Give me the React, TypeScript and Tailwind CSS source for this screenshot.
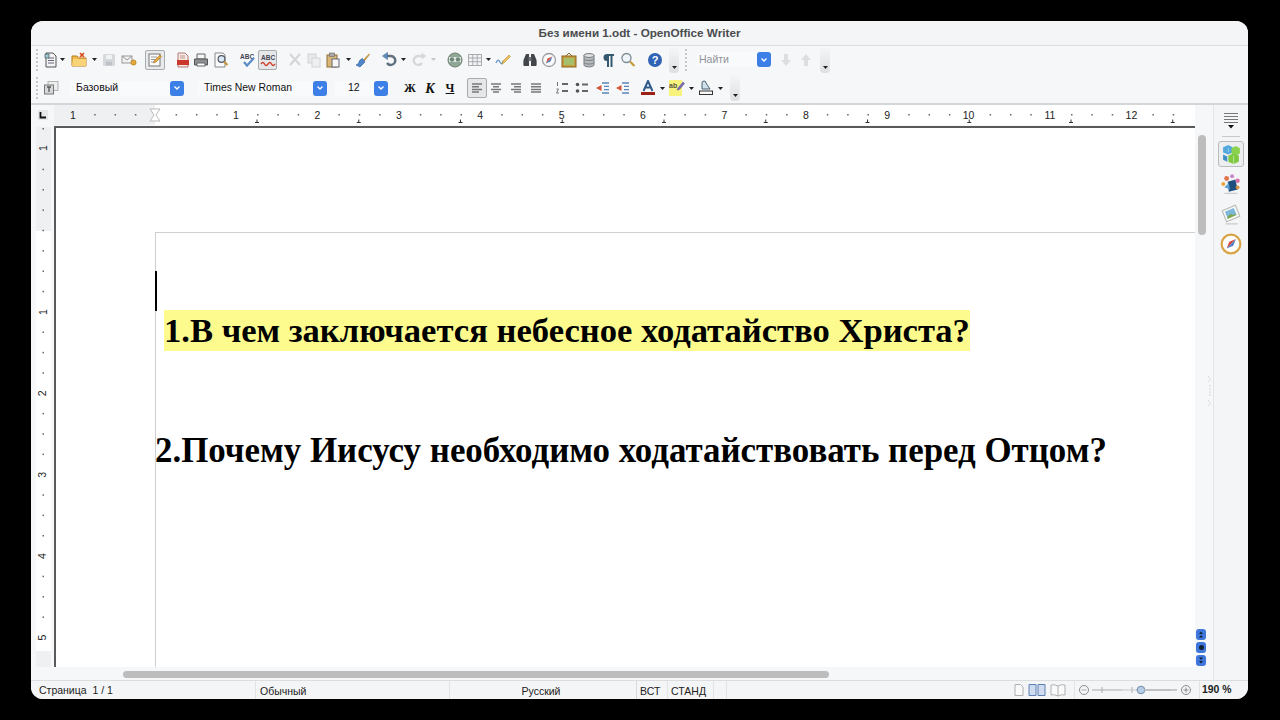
import type { ReactNode } from "react";

const cm = 81.4;
const sans = "font-['Liberation_Sans',Arial,sans-serif]";

function Ico({ children, className = "" }: { children: ReactNode; className?: string }) {
  return (
    <svg viewBox="0 0 16 16" className={`h-4 w-4 shrink-0 ${className}`} fill="none">
      {children}
    </svg>
  );
}

function Caret({ className = "", light = false }: { className?: string; light?: boolean }) {
  return (
    <svg viewBox="0 0 5 3" className={`h-[3px] w-[5px] shrink-0 ${className}`}>
      <path d="M0 0h5L2.5 3z" fill={light ? "#c8c8c8" : "#222"} />
    </svg>
  );
}

function Grip({ className = "" }: { className?: string }) {
  return <div className={`h-[22px] w-[2px] shrink-0 border-l-2 border-dotted border-[#c4c8cc] ${className}`} />;
}

function Overflow({ className = "" }: { className?: string }) {
  return (
    <div className={`flex h-[26px] w-[10px] shrink-0 items-end justify-center rounded-sm bg-gradient-to-b from-[#f5f6f7] to-[#dedfe0] pb-[4px] ${className}`}>
      <Caret />
    </div>
  );
}

function BlueBtn() {
  return (
    <div className="flex h-[15px] w-[14px] shrink-0 items-center justify-center rounded-[3px] bg-[#3c7fe6]">
      <svg viewBox="0 0 8 6" className="h-[6px] w-[8px]">
        <path d="M1.5 1.5 4 4l2.5-2.5" stroke="#fff" strokeWidth="1.3" fill="none" />
      </svg>
    </div>
  );
}

function Lines({ rows }: { rows: [number, number][] }) {
  return (
    <Ico>
      {rows.map(([a, b], i) => (
        <path key={i} d={`M${a} ${4 + i * 2.7}H${b}`} stroke="#777" strokeWidth="1.5" />
      ))}
    </Ico>
  );
}

function MainToolbar() {
  return (
    <div className="flex h-[27px] shrink-0 items-center pl-[5px]">
      <Grip />
      <Ico className="ml-[5px]">
        <path d="M3 1h7l3 3v11H3z" fill="#f4f4f4" stroke="#555" />
        <path d="M5 6h6M5 8.5h6M5 11h6" stroke="#667" />
        <path d="M2 2h4v4H2z" fill="#9cc" stroke="#456" strokeWidth=".7" />
      </Ico>
      <Caret className="ml-[1px]" />
      <Ico className="ml-[6px]">
        <path d="M1 4h5l1.500 2H15v8H1z" fill="#f3bb4c" stroke="#b67a1f" />
        <path d="M2 7h13v7H1z" fill="#f8d377" />
        <path d="m9 1 4 4M13 1 9 5" stroke="#d9481c" strokeWidth="1.600" />
      </Ico>
      <Caret className="ml-[5px]" />
      <Ico className="ml-[4px]">
        <rect x="2" y="2" width="12" height="12" rx="1.500" fill="#d6d9dc" />
        <rect x="5" y="3" width="6" height="4" fill="#f1f2f3" />
        <rect x="5" y="9.500" width="6" height="4" fill="#bfc3c7" />
      </Ico>
      <Ico className="ml-[4px]">
        <rect x="1" y="4" width="10" height="7" fill="#f2f2f2" stroke="#999" />
        <path d="m1 4 5 4 5-4" stroke="#999" />
        <circle cx="12.500" cy="10.500" r="2.600" fill="#e4a93a" stroke="#a87416" strokeWidth=".6" />
      </Ico>
      <div className="ml-[8px] flex h-[20px] w-[20px] shrink-0 items-center justify-center rounded-[2px] border border-[#a9acaf] bg-[#e9eaeb]">
        <Ico>
          <rect x="2" y="2" width="11" height="12" fill="#fafafa" stroke="#777" />
          <path d="M4 5h6M4 7.500h4M4 10h3" stroke="#999" />
          <path d="m6.500 11 1-2.500L13 3l1.500 1.500L9 10z" fill="#e6a93e" stroke="#a06c14" strokeWidth=".6" />
        </Ico>
      </div>
      <Ico className="ml-[10px]">
        <path d="M3 1h7l3 3v11H3z" fill="#f8e9e6" stroke="#b07b72" />
        <rect x="2" y="8" width="12" height="5" fill="#c9382b" />
        <path d="M5 4h5M5 6h5" stroke="#b98" />
      </Ico>
      <Ico className="ml-[2px]">
        <path d="M4 2h8v5H4z" fill="#f4f4f4" stroke="#666" />
        <path d="M1.500 7h13v6h-13z" fill="#8b8f93" stroke="#555" />
        <path d="M4 11h8v3H4z" fill="#fff" stroke="#666" />
      </Ico>
      <Ico className="ml-[4px]">
        <path d="M2 1h8l2 2v12H2z" fill="#fafafa" stroke="#888" />
        <circle cx="8.500" cy="7" r="3.400" fill="#d8eaf5" stroke="#556" strokeWidth="1.200" />
        <path d="m11 9.500 3.500 3.500" stroke="#c49434" strokeWidth="2" />
      </Ico>
      <Ico className="ml-[11px]">
        <text x="0" y="7" fontSize="6.500" fontWeight="700" fill="#445" fontFamily="Liberation Sans">ABC</text>
        <path d="m4 10 3 3.500L14 6" stroke="#5b8ec9" strokeWidth="2.200" />
      </Ico>
      <div className="ml-[2px] flex h-[20px] w-[19px] shrink-0 items-center justify-center rounded-[2px] border border-[#a9acaf] bg-[#e6e7e8]">
        <Ico>
          <text x="1" y="8" fontSize="6.500" fontWeight="700" fill="#445" fontFamily="Liberation Sans">ABC</text>
          <path d="M1 12q2-3 3.500 0t3.500 0 3.500 0 3.500 0" stroke="#d0402f" strokeWidth="1.400" />
        </Ico>
      </div>
      <Ico className="ml-[10px]">
        <path d="m3 2 10 11M13 2 3 13" stroke="#d4d6d8" strokeWidth="2.200" />
      </Ico>
      <Ico className="ml-[3px]">
        <rect x="2" y="2" width="8" height="9" fill="#e8e9ea" stroke="#d2d4d6" />
        <rect x="6" y="6" width="8" height="9" fill="#eeeff0" stroke="#d2d4d6" />
      </Ico>
      <Ico className="ml-[3px]">
        <rect x="2" y="3" width="10" height="12" fill="#d8b779" stroke="#8b6f3d" />
        <rect x="4.500" y="1" width="5" height="3.500" fill="#aaa" stroke="#666" strokeWidth=".6" />
        <rect x="7" y="7" width="7" height="8" fill="#f7f7f7" stroke="#667" />
      </Ico>
      <Caret className="ml-[5px]" />
      <Ico className="ml-[4px]">
        <path d="m8 8 6-6.500 1 1L9.500 9.500z" fill="#c49a4f" />
        <path d="M7.500 6.500 10 10l-5 5-4-2q3-1 3-3t3.500-3.500z" fill="#4f86c9" stroke="#2f5f9e" strokeWidth=".6" />
      </Ico>
      <Ico className="ml-[10px]">
        <path d="M5 4h5a4.500 4.500 0 1 1-4 7" stroke="#5f6f7e" strokeWidth="2.400" />
        <path d="M6.500 0.500 1.500 4l5 3.500z" fill="#5d8fc4" stroke="#3f5f80" strokeWidth=".5" />
      </Ico>
      <Caret className="ml-[4px]" />
      <Ico className="ml-[6px]">
        <path d="M11 4H6a4.500 4.500 0 1 0 4 7" stroke="#d6d9dc" strokeWidth="2.400" />
        <path d="m9.500.5 5 3.500-5 3.500z" fill="#d6d9dc" />
      </Ico>
      <Caret light className="ml-[3px]" />
      <Ico className="ml-[11px]">
        <circle cx="8" cy="8" r="7" fill="#8fa896" stroke="#6b7d70" />
        <rect x="2" y="5" width="12" height="5" fill="#dfe6e0" />
        <circle cx="5" cy="7.500" r="2.200" fill="#6d8878" />
        <circle cx="11" cy="7.500" r="2.200" fill="#6d8878" />
      </Ico>
      <Ico className="ml-[4px]">
        <path d="M1.500 2.500h13v11h-13zM1.500 6h13M1.500 9.700h13M5.800 2.500v11M10.200 2.500v11" fill="#f2f3f4" stroke="#a7abaf" />
      </Ico>
      <Caret className="ml-[3px]" />
      <Ico className="ml-[4px]">
        <path d="M1 11q2-5 4-1t3-1" stroke="#6f9fd0" strokeWidth="1.400" />
        <path d="m7 12 1-3 6-6 1.500 1.500-6 6z" fill="#ecc05e" stroke="#b78d34" strokeWidth=".6" />
      </Ico>
      <Ico className="ml-[11px]">
        <path d="M1.500 8 4 2h3v12H2q-1 0-.5-6zM14.500 8 12 2H9v12h5q1 0 .5-6z" fill="#43474b" />
        <rect x="6.500" y="5" width="3" height="4" fill="#6d7276" />
      </Ico>
      <Ico className="ml-[3px]">
        <circle cx="8" cy="8" r="6.500" fill="#fafafa" stroke="#9a9ea2" strokeWidth="1.300" />
        <path d="m11.500 4.500-5 2L5 11.500z" fill="#d84a3a" />
        <path d="m11.500 4.500-2 5-4.500 2z" fill="#4d7fc2" />
      </Ico>
      <Ico className="ml-[4px]">
        <rect x="1" y="4" width="14" height="11" fill="#c99b3f" stroke="#8a6720" />
        <rect x="3" y="6" width="10" height="7" fill="#a4c06c" />
        <path d="M5 4 8 1l3 3" stroke="#8a6720" />
      </Ico>
      <Ico className="ml-[4px]">
        <path d="M3 3v10c0 2.500 10 2.500 10 0V3z" fill="#b6babd" stroke="#777c80" />
        <ellipse cx="8" cy="3.500" rx="5" ry="2" fill="#dfe1e3" stroke="#777c80" />
        <path d="M3 7c0 2 10 2 10 0M3 10.500c0 2 10 2 10 0" stroke="#777c80" />
      </Ico>
      <Ico className="ml-[3px]">
        <path d="M7 2h7v2h-1.500v11h-2V4H9v11H7V9a3.500 3.500 0 0 1 0-7z" fill="#35596f" />
      </Ico>
      <Ico className="ml-[4px]">
        <circle cx="6.500" cy="6" r="4.500" fill="#eef5f9" stroke="#7c8b96" strokeWidth="1.300" />
        <path d="m10 9.500 4.500 4.500" stroke="#c89a3b" strokeWidth="2.200" />
      </Ico>
      <Ico className="ml-[11px]">
        <circle cx="8" cy="8" r="7" fill="#2f63b5" />
        <text x="8" y="12" textAnchor="middle" fontSize="11" fontWeight="700" fill="#fff" fontFamily="Liberation Sans">?</text>
      </Ico>
      <Overflow className="ml-[6px]" />
      <Grip className="ml-[6px]" />
      <div className={`ml-[10px] flex h-[15px] w-[60px] shrink-0 items-center bg-[#f9fafb] pl-[2px] text-[10.5px] text-[#8f9397] ${sans}`}>
        Найти
      </div>
      <BlueBtn />
      <Ico className="ml-[7px]">
        <path d="M6 2h4v6h3l-5 6-5-6h3z" fill="#dcdee0" />
      </Ico>
      <Ico className="ml-[4px]">
        <path d="M6 14h4V8h3L8 2 3 8h3z" fill="#dcdee0" />
      </Ico>
      <Overflow className="ml-[6px]" />
    </div>
  );
}

function FormatToolbar() {
  return (
    <div className={`flex h-[30px] shrink-0 items-center pl-[5px] text-[#111] ${sans}`}>
      <Grip />
      <Ico className="ml-[5px]">
        <rect x="5" y="1.500" width="10" height="9" fill="#eceded" stroke="#b3b5b7" />
        <rect x="1.500" y="5" width="9" height="9" fill="#d6d8da" stroke="#777" />
        <path d="M4 7h4M6 7v5" stroke="#555" strokeWidth="1.300" />
      </Ico>
      <div className="ml-[11px] flex h-[15px] w-[100px] shrink-0 items-center bg-[#f9fafb] pl-[6px] text-[10.5px]">Базовый</div>
      <BlueBtn />
      <div className="ml-[14px] flex h-[15px] w-[115px] shrink-0 items-center bg-[#f9fafb] pl-[6px] text-[10.4px]">Times New Roman</div>
      <BlueBtn />
      <div className="ml-[8px] flex h-[15px] w-[39px] shrink-0 items-center bg-[#f9fafb] pl-[13px] text-[10.5px]">12</div>
      <BlueBtn />
      <div className="ml-[15px] flex w-[14px] shrink-0 justify-center font-['Liberation_Serif',serif] text-[12px] font-bold">Ж</div>
      <div className="ml-[6px] flex w-[14px] shrink-0 justify-center font-['Liberation_Serif',serif] text-[14px] font-bold italic">К</div>
      <div className="ml-[6px] flex w-[14px] shrink-0 justify-center font-['Liberation_Serif',serif] text-[12px] font-bold underline">Ч</div>
      <div className="ml-[10px] flex h-[20px] w-[20px] shrink-0 items-center justify-center rounded-[2px] border border-[#a9acaf] bg-[#e6e7e8]">
        <Lines rows={[[3, 13], [3, 10], [3, 13], [3, 10]]} />
      </div>
      <div className="ml-[1px]"><Lines rows={[[3, 13], [5, 11], [3, 13], [5, 11]]} /></div>
      <div className="ml-[4px]"><Lines rows={[[3, 13], [6, 13], [3, 13], [6, 13]]} /></div>
      <div className="ml-[4px]"><Lines rows={[[3, 13], [3, 13], [3, 13], [3, 13]]} /></div>
      <Ico className="ml-[10px]">
        <path d="M8 4h6M8 11h6" stroke="#666" strokeWidth="1.800" />
        <path d="M3.500 2v4M2.500 9h2l-2 4h2.500" stroke="#666" strokeWidth=".9" />
      </Ico>
      <Ico className="ml-[4px]">
        <circle cx="3.500" cy="4.500" r="1.800" fill="#555" />
        <circle cx="3.500" cy="11" r="1.800" fill="#555" />
        <path d="M8 4.500h6M8 11h6" stroke="#666" strokeWidth="1.800" />
      </Ico>
      <Ico className="ml-[4px]">
        <path d="M8 3h7M10 6.300h5M10 9.600h5M8 13h7" stroke="#5b87b8" strokeWidth="1.300" />
        <path d="M7.500 5 2 8l5.500 3z" fill="#d2563a" />
      </Ico>
      <Ico className="ml-[4px]">
        <path d="M8 3h7M10 6.300h5M10 9.600h5M8 13h7" stroke="#5b87b8" strokeWidth="1.300" />
        <path d="M7.500 5 2 8l5.500 3z" fill="#d2563a" />
      </Ico>
      <Ico className="ml-[10px]">
        <path d="M3.500 11 8 1l4.500 10M5.500 7.500h5" stroke="#2f5c8c" strokeWidth="2" />
        <rect x="1" y="12" width="14" height="3" fill="#9c1f14" />
      </Ico>
      <Caret className="ml-[4px]" />
      <Ico className="ml-[4px]">
        <rect x="0" y="0" width="13" height="16" fill="#f8f37c" />
        <text x="0" y="8" fontSize="7" fontWeight="700" fill="#554" fontFamily="Liberation Sans">ab</text>
        <path d="m8 10 1-2 5-6 1.500 1.500-5 6z" fill="#7c6cb8" stroke="#55488c" strokeWidth=".5" />
      </Ico>
      <Caret className="ml-[4px]" />
      <Ico className="ml-[4px]">
        <path d="M4 9V3a2 2 0 0 1 4 0l4 6z" fill="#cfe0ec" stroke="#49606f" />
        <rect x="1.500" y="11" width="13" height="3.500" fill="#fafafa" stroke="#333" />
      </Ico>
      <Caret className="ml-[4px]" />
      <Overflow className="ml-[7px]" />
    </div>
  );
}

function HRuler() {
  const nums = [
    { n: 1, x: 19 },
    ...Array.from({ length: 12 }, (_, i) => ({ n: i + 1, x: 182 + i * cm })),
  ];
  const dots = Array.from({ length: 56 }, (_, i) => 0 + i * (cm / 4) - 0.5).filter(
    (x) => x > 0 && !nums.some((m) => Math.abs(m.x - x) < 5) && Math.abs(x - 101) > 6,
  );
  const tabs = Array.from({ length: 10 }, (_, i) => 203 + i * 101.75);
  return (
    <svg viewBox="0 0 1141 20" className="h-5 w-[1141px] shrink-0">
      <rect width="101" height="20" fill="#eff0f1" />
      <rect x="101" width="1040" height="20" fill="#fff" />
      {nums.map((m, i) => (
        <text key={i} x={m.x} y="13.500" textAnchor="middle" fontSize="10.500" fontFamily="Liberation Sans" fill="#222">
          {m.n}
        </text>
      ))}
      {dots.map((x, i) => (
        <rect key={i} x={x} y="9" width="1.500" height="1.500" fill="#666" />
      ))}
      {tabs.map((x, i) => (
        <path key={i} d={`M${x - 2} 17.500h4M${x} 14.500v3`} stroke="#333" strokeWidth="1" />
      ))}
      <path d="M96 4h10l-4 6 4 6H96l4-6z" fill="#fff" stroke="#bbb" />
    </svg>
  );
}

function VRuler() {
  const nums = [
    { n: 1, y: 21 },
    ...Array.from({ length: 5 }, (_, i) => ({ n: i + 1, y: 185 + i * cm })),
  ];
  const dots = Array.from({ length: 26 }, (_, i) => i * (cm / 4) + 1).filter(
    (y) => !nums.some((m) => Math.abs(m.y - y) < 5),
  );
  return (
    <svg viewBox="0 0 15 540" className="ml-[5px] h-[540px] w-[15px] shrink-0">
      <rect width="15" height="104" fill="#eff0f1" />
      <rect y="104" width="15" height="420" fill="#fff" />
      <rect y="524" width="15" height="16" fill="#eff0f1" />
      {nums.map((m, i) => (
        <text
          key={i}
          x="7"
          y={m.y}
          transform={`rotate(-90 7 ${m.y})`}
          dy="3.500"
          textAnchor="middle"
          fontSize="10.500"
          fontFamily="Liberation Sans"
          fill="#222"
        >
          {m.n}
        </text>
      ))}
      {dots.map((y, i) => (
        <rect key={i} x="6.500" y={y} width="1.500" height="1.500" fill="#666" />
      ))}
    </svg>
  );
}

function Sidebar() {
  return (
    <div className="flex w-[35px] shrink-0 flex-col items-center border-l border-[#e4e5e6] bg-[#f4f5f6] pt-[7px]">
      <svg viewBox="0 0 16 17" className="h-[17px] w-4 shrink-0">
        <path d="M1 1.500h14M1 4.500h14M1 7.500h14M1 10.500h14" stroke="#777" strokeWidth="1.200" />
        <path d="M5 13h6l-3 3.500z" fill="#111" />
      </svg>
      <div className="mt-[7px] h-px w-[18px] bg-[#c8c8c8]" />
      <div className="mt-[4px] flex h-[26px] w-[26px] items-center justify-center rounded-[3px] border border-[#b9bbbd] bg-[#eceef0]">
        <svg viewBox="0 0 20 20" className="h-[21px] w-[21px]">
          <path d="M2 3l5-2 4 2v5l-4 2-5-2z" fill="#53a7dc" />
          <path d="M10 4l4-2 4 2v5l-4 2-4-2z" fill="#8bd14e" />
          <path d="M2 10l4 2v5l-4-2z" fill="#3f90c8" />
          <path d="M7 11l5-2 5 2v6l-5 2-5-2z" fill="#7fca42" />
          <path d="M7 4v4M12 11v8" stroke="#fff" strokeWidth=".7" opacity=".6" />
        </svg>
      </div>
      <svg viewBox="0 0 20 20" className="mt-[6px] h-[22px] w-[22px]">
        <path d="M7 8 14 6l2 9-8 2z" fill="#1f4f7f" />
        <path d="m4 13 4-4 1 6z" fill="#5aa2d4" />
        <circle cx="6" cy="5" r="2.200" fill="#e2754f" />
        <circle cx="11" cy="3" r="1.800" fill="#c788c9" />
        <circle cx="16" cy="7" r="2" fill="#d86fa8" />
        <circle cx="3" cy="10" r="1.800" fill="#e8a53c" />
        <circle cx="16" cy="13" r="1.700" fill="#d9913f" />
        <path d="M4 18.500h12" stroke="#ccc" />
      </svg>
      <svg viewBox="0 0 20 20" className="mt-[8px] h-[22px] w-[22px]">
        <path d="M2 7 14 2l4 10-12 5z" fill="#fafafa" stroke="#b7bbb4" />
        <path d="m4.500 8 8-3.500 2.500 6-8 3.500z" fill="#7cb6d8" />
        <path d="m6.500 13 3-3 2 1 3-1 .5 1-8 3.500z" fill="#7da84a" />
        <path d="M5 19h11" stroke="#c9c9c9" />
      </svg>
      <svg viewBox="0 0 20 20" className="mt-[8px] h-[22px] w-[22px]">
        <circle cx="10" cy="10" r="8.500" fill="#fff" stroke="#d9a548" strokeWidth="2" />
        <path d="m14.500 5.500-6 2.500-2.500 6z" fill="#d7443a" />
        <path d="m14.500 5.500-2.500 6-6 2.500z" fill="#4e7fc4" />
      </svg>
    </div>
  );
}

function StatusBar() {
  return (
    <div className={`flex h-[19px] shrink-0 items-center border-t border-[#dcdddf] bg-[#f4f5f6] text-[10.5px] text-[#222] ${sans}`}>
      <div className="w-[224px] shrink-0 pl-[8px] leading-[20px]">Страница&nbsp; 1 / 1</div>
      <div className="h-full w-[194px] shrink-0 border-l border-[#e2e3e4] pl-[4px] leading-[20px]">Обычный</div>
      <div className="h-full w-[187px] shrink-0 border-l border-[#e2e3e4] pr-[4px] text-center leading-[20px]">Русский</div>
      <div className="h-full w-[31px] shrink-0 border-l border-[#d8d9da] pl-[3px] leading-[20px]">ВСТ</div>
      <div className="h-full w-[46px] shrink-0 border-l border-[#e2e3e4] pl-[3px] leading-[20px]">СТАНД</div>
      <div className="h-full w-[13px] shrink-0 border-l border-[#e2e3e4]" />
      <div className="h-full w-[285px] shrink-0 border-l border-[#e2e3e4]" />
      <Ico className="shrink-0">
        <path d="M4 2.500h5.500L12 5v8.500H4z" fill="#fafafa" stroke="#aeb0b2" />
      </Ico>
      <svg viewBox="0 0 18 14" className="ml-[1px] h-[14px] w-[18px] shrink-0">
        <path d="M1 1.500h7v11H1zM10 1.500h7v11h-7z" fill="#cfdcf0" stroke="#5d7fb5" />
      </svg>
      <svg viewBox="0 0 18 14" className="ml-[3px] h-[14px] w-[18px] shrink-0">
        <path d="M9 3Q5 1 2 2v10q3-1 7 1 4-2 7-1V2q-3-1-7 1zM9 3v10" fill="#fafafa" stroke="#aeb0b2" />
      </svg>
      <div className="ml-[7px] h-full w-px shrink-0 bg-[#e2e3e4]" />
      <svg viewBox="0 0 116 12" className="ml-[3px] h-[12px] w-[116px] shrink-0">
        <circle cx="6" cy="6" r="4.500" fill="none" stroke="#8a8c8e" />
        <path d="M3.500 6h5M14 6h30M58 6h34M24 3v6M54 3v6" stroke="#a9abad" />
        <path d="M44 6h16" stroke="#c5c7c9" />
        <circle cx="63" cy="6" r="3.800" fill="#b7cde6" stroke="#6f8aa8" />
        <path d="M66 6h33" stroke="#b9bbbd" strokeWidth="1.400" />
        <circle cx="108" cy="6" r="4.500" fill="none" stroke="#8a8c8e" />
        <path d="M105.500 6h5M108 3.500v5" stroke="#8a8c8e" />
      </svg>
      <div className="ml-[5px] h-full w-px shrink-0 bg-[#e2e3e4]" />
      <div className="ml-[2px] text-[10.4px] font-bold leading-[20px]">190 %</div>
    </div>
  );
}

export default function App() {
  return (
    <div className="h-screen w-full overflow-hidden bg-black pl-[31px] pt-[21px]">
      <div className="flex h-[678px] w-[1217px] flex-col overflow-hidden rounded-[12px] bg-[#f6f7f8]">
        <div className={`flex h-[25px] shrink-0 items-center justify-center border-b border-[#dddee0] bg-[#f3f5f6] text-[11.7px] font-bold text-[#4a4c4e] ${sans}`}>
          Без имени 1.odt - OpenOffice Writer
        </div>
        <MainToolbar />
        <FormatToolbar />
        <div className="h-[2px] shrink-0 bg-[#d4d5d6]" />
        <div className="flex min-h-0 flex-1">
          <div className="flex w-[1182px] shrink-0 flex-col">
            <div className="flex h-[21px] shrink-0 items-start">
              <div className="flex h-5 w-[23px] shrink-0 items-center justify-center">
                <svg viewBox="0 0 10 10" className="ml-[1px] h-[10px] w-[10px]">
                  <rect width="10" height="10" fill="#e6e7e8" />
                  <path d="M2.500 2v5.500H8" stroke="#111" strokeWidth="1.800" fill="none" />
                </svg>
              </div>
              <HRuler />
            </div>
            <div className="flex min-h-0 flex-1">
              <div className="w-[23px] shrink-0 pt-[1px]">
                <VRuler />
              </div>
              <div className="flex h-[541px] w-[1141px] shrink-0 flex-col overflow-hidden border-l-2 border-t-2 border-[#5a5a5a] bg-white pl-[99px] pt-[104px]">
                <div className="flex-1 border-l border-t border-[#cfcfcf] pt-[38px] font-['Liberation_Serif',serif] font-bold text-black">
                  <div className="-ml-px h-[40px] w-[2px] bg-black" />
                  <div className="-mt-px ml-[8px] w-fit whitespace-nowrap bg-[#fdfb8e] text-[34.6px] leading-[41px]">
                    1.В чем заключается небесное ходатайство Христа?
                  </div>
                  <div className="mt-[79px] -ml-px whitespace-nowrap text-[34.9px] leading-[41px]">
                    2.Почему Иисусу необходимо ходатайствовать перед Отцом?
                  </div>
                </div>
              </div>
              <div className="relative flex w-[18px] shrink-0 flex-col items-center pt-[9px]">
                <div className="-ml-[5px] h-[100px] w-[8px] rounded bg-[#bdbdbd]" />
                <svg viewBox="0 0 6 32" className="absolute right-0 top-[249px] h-[32px] w-[6px]">
                  <path d="M1 1l2.500 3L1 7M1 25l2.500 3L1 31M3 10v12" stroke="#d4d5d6" strokeWidth="1" fill="none" strokeDasharray="2 1" />
                </svg>
                <div className="mt-auto -ml-[6px] flex flex-col gap-[2px]">
                  <div className="flex h-[11px] w-[10px] items-center justify-center rounded-[3px] bg-[#3f76dc]">
                    <svg viewBox="0 0 6 7" className="h-[7px] w-[6px]"><path d="M1 3 3 .5 5 3zM1 6.500 3 4l2 2.500z" fill="#123" /></svg>
                  </div>
                  <div className="flex h-[11px] w-[10px] items-center justify-center rounded-[3px] bg-[#3f76dc]">
                    <div className="h-[5px] w-[5px] rounded-full bg-[#123]" />
                  </div>
                  <div className="mb-[1px] flex h-[11px] w-[10px] items-center justify-center rounded-[3px] bg-[#3f76dc]">
                    <svg viewBox="0 0 6 7" className="h-[7px] w-[6px]"><path d="M1 .5 3 3 5 .5zM1 4l2 2.500L5 4z" fill="#123" /></svg>
                  </div>
                </div>
              </div>
            </div>
            <div className="flex h-[13px] shrink-0 items-end pb-[2px]">
              <div className="ml-[92px] h-[7px] w-[706px] rounded bg-[#bdbdbd]" />
            </div>
          </div>
          <Sidebar />
        </div>
        <StatusBar />
      </div>
    </div>
  );
}
